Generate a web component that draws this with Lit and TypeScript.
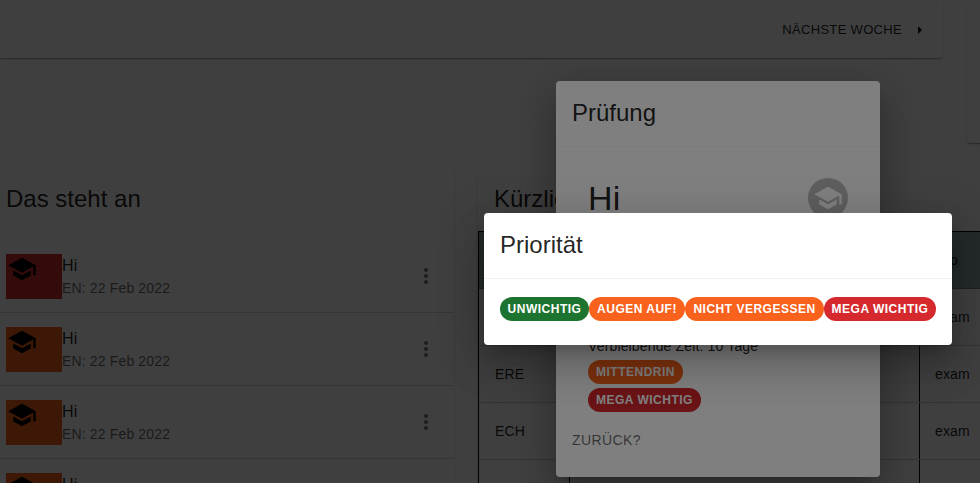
import { LitElement, html, css } from "lit";
import { customElement } from "lit/decorators.js";
import { classMap } from "lit/directives/class-map.js";

const school = (cls: string) => html`<svg class=${cls} viewBox="0 0 24 24">
  <path d="M5 13.18v4L12 21l7-3.82v-4L12 17l-7-3.82zM12 3 1 9l11 6 9-4.91V17h2V9L12 3z"/>
</svg>`;

const dots = html`<svg class="dots" viewBox="0 0 24 24">
  <path d="M12 8c1.1 0 2-.9 2-2s-.9-2-2-2-2 .9-2 2 .9 2 2 2zm0 2c-1.1 0-2 .9-2 2s.9 2 2 2 2-.9 2-2-.9-2-2-2zm0 6c-1.1 0-2 .9-2 2s.9 2 2 2 2-.9 2-2-.9-2-2-2z"/>
</svg>`;

interface Task {
  title: string;
  info: string;
  urgent: boolean;
}

const tasks: Task[] = [
  { title: "Hi", info: "EN: 22 Feb 2022", urgent: true },
  { title: "Hi", info: "EN: 22 Feb 2022", urgent: false },
  { title: "Hi", info: "EN: 22 Feb 2022", urgent: false },
  { title: "Hi", info: "EN: 22 Feb 2022", urgent: false },
];

const exams = [
  ["", "", "exam"],
  ["ERE", "", "exam"],
  ["ECH", "", "exam"],
  ["ERE", "", ""],
];

@customElement("app-root")
export class AppRoot extends LitElement {
  static styles = css`
    :host {
      display: block;
      position: relative;
      width: 980px;
      height: 483px;
      overflow: hidden;
      background: #fff;
      color: rgba(0, 0, 0, 0.87);
      font: 14px/20px "Liberation Sans", Arial, sans-serif;
      letter-spacing: 0.15px;
    }
    * { box-sizing: border-box; }
    .page { display: flex; flex-direction: column; gap: 24px; height: 483px; }
    .top { display: flex; gap: 24px; align-items: flex-start; height: 143px; }
    .card {
      background: #fff;
      border-radius: 4px;
      flex: none;
      box-shadow: 0 2px 1px -1px rgba(0,0,0,.2), 0 1px 1px rgba(0,0,0,.14), 0 1px 3px rgba(0,0,0,.12);
    }
    .week { width: 943px; height: 58px; border-radius: 0 0 4px 0; padding-top: 2px; }
    .week-foot {
      display: flex; justify-content: flex-end; align-items: center;
      height: 54px; padding: 0 20px 0 0; gap: 15px;
      border-top: 1px solid rgba(0,0,0,.04);
      font-size: 13px; letter-spacing: 0.32px;
    }
    .arrow { width: 6px; height: 8px; fill: #111; }
    .side { width: 300px; height: 143px; padding-top: 88px; }
    .side-foot { border-top: 1px solid rgba(0,0,0,.04); }
    .bottom { display: flex; gap: 24px; }
    .todo { width: 454px; height: 420px; }
    .recent { width: 700px; height: 420px; }
    .head {
      height: 64px; padding: 16px 16px 0;
      font-size: 24px; line-height: 32px; letter-spacing: 0;
    }
    .todo .head { padding-left: 6px; border-bottom: 1px solid rgba(0,0,0,.03); }
    .list { padding-top: 9px; }
    .row {
      display: flex; align-items: center; height: 73px;
      padding: 0 16px 0 6px; border-bottom: 1px solid rgba(0,0,0,.16);
    }
    .thumb { width: 56px; height: 45px; background: #f4601c; padding-left: 0.5px; }
    .thumb.urgent { background: #d32f2f; }
    .cap { display: block; width: 30px; height: 30px; fill: #000; }
    .words { flex: 1; }
    .title { font-size: 16px; line-height: 24px; }
    .info { font-size: 14px; line-height: 20px; color: rgba(0,0,0,.6); }
    .dots { width: 24px; height: 24px; fill: rgba(0,0,0,.54); }
    .table { border-left: 1px solid #000; }
    .tr {
      display: grid; grid-template-columns: 90px 350px 1fr; height: 57px;
      border-bottom: 1px solid rgba(0,0,0,.18);
    }
    .tr.th { background: #90a4a8; border-top: 1px solid #000; height: 58px; }
    .td { padding: 18px 16px 0; white-space: nowrap; }
    .td + .td { border-left: 1px solid #000; padding-left: 15px; }
    .tr.th .td { border-left-color: transparent; }
    .layer {
      position: absolute; top: 0; left: 0; width: 1436px; height: 558px;
      display: flex; align-items: center; justify-content: center;
      background: rgba(0,0,0,.5);
    }
    .dialog {
      background: #fff; border-radius: 4px;
      box-shadow: 0 11px 15px -7px rgba(0,0,0,.2), 0 24px 38px 3px rgba(0,0,0,.14), 0 9px 46px 8px rgba(0,0,0,.12);
    }
    .exam { width: 324px; height: 396px; }
    .prio { width: 468px; height: 132px; }
    .dialog .head { height: 66px; border-bottom: 1px solid rgba(0,0,0,.05); }
    .exam .head { border-bottom-color: rgba(0,0,0,.03); }
    .body { display: flex; flex-direction: column; height: 275px; padding: 31px 32px 10px; }
    .subject { display: flex; justify-content: space-between; align-items: center; height: 40px; }
    .name { font-size: 34px; line-height: 42px; letter-spacing: 0.25px; }
    .avatar {
      width: 40px; height: 40px; border-radius: 50%; background: #bdbdbd;
      display: flex; align-items: center; justify-content: center;
    }
    .avatar-cap { width: 30px; height: 30px; fill: #fff; }
    .details { margin-top: auto; display: flex; flex-direction: column; align-items: flex-start; gap: 4px; }
    .back { padding: 8px 16px; letter-spacing: 0.4px; color: rgba(0,0,0,.6); }
    .chips { display: flex; padding: 18px 16px; }
    .chip {
      height: 24px; border-radius: 12px; padding: 0 8px; flex: none;
      font-size: 12px; line-height: 24px; font-weight: 700; letter-spacing: 0.5px;
      color: #fff; white-space: nowrap;
    }
    .chips .chip { padding: 0; text-align: center; }
    .chips .chip:nth-child(1) { width: 89px; }
    .chips .chip:nth-child(2) { width: 96px; }
    .chips .chip:nth-child(3) { width: 139px; }
    .chips .chip:nth-child(4) { width: 112px; }
    .green { background: #1d7430; }
    .orange { background: #f8621c; }
    .red { background: #d6292e; }
  `;

  private chip(label: string, tone: string) {
    return html`<span class="chip ${tone}">${label}</span>`;
  }

  render() {
    return html`
      <div class="page">
        <div class="top">
          <div class="card week">
            <div class="week-foot">
              <span>NÄCHSTE WOCHE</span>
              <svg class="arrow" viewBox="0 0 6 8"><path d="M1 0 5 4 1 8z"/></svg>
            </div>
          </div>
          <div class="card side"><div class="side-foot"></div></div>
        </div>
        <div class="bottom">
          <div class="card todo">
            <div class="head">Das steht an</div>
            <div class="list">
              ${tasks.map((t) => html`<div class="row">
                <div class=${classMap({ thumb: true, urgent: t.urgent })}>${school("cap")}</div>
                <div class="words">
                  <div class="title">${t.title}</div>
                  <div class="info">${t.info}</div>
                </div>
                ${dots}
              </div>`)}
            </div>
          </div>
          <div class="card recent">
            <div class="head">Kürzlich</div>
            <div class="table">
              <div class="tr th">
                <div class="td"></div><div class="td"></div><div class="td">Typ</div>
              </div>
              ${exams.map((r) => html`<div class="tr">${r.map((c) => html`<div class="td">${c}</div>`)}</div>`)}
            </div>
          </div>
        </div>
      </div>
      <div class="layer">
        <div class="dialog exam">
          <div class="head">Prüfung</div>
          <div class="body">
            <div class="subject">
              <span class="name">Hi</span>
              <span class="avatar">${school("avatar-cap")}</span>
            </div>
            <div class="details">
              <span>Verbleibende Zeit: 10 Tage</span>
              ${this.chip("MITTENDRIN", "orange")}
              ${this.chip("MEGA WICHTIG", "red")}
            </div>
          </div>
          <div class="back">ZURÜCK?</div>
        </div>
      </div>
      <div class="layer">
        <div class="dialog prio">
          <div class="head">Priorität</div>
          <div class="chips">
            ${this.chip("UNWICHTIG", "green")}${this.chip("AUGEN AUF!", "orange")}${this.chip("NICHT VERGESSEN", "orange")}${this.chip("MEGA WICHTIG", "red")}
          </div>
        </div>
      </div>
    `;
  }
}
